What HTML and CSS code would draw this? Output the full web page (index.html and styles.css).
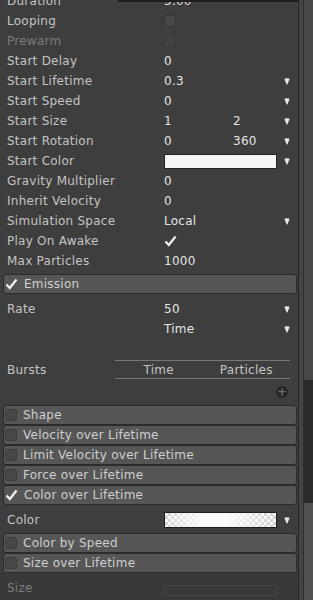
FILE: index.html
```html
<!DOCTYPE html>
<html>
<head>
    <meta charset="UTF-8">
    <title>Particle System</title>
    <link rel="stylesheet" href="styles.css">
</head>
<body>
<div class="window">
    <div class="popup-edge"></div>

    <div class="inspector">
        <div class="props">
            <div class="row"><span>Duration</span><span class="val">5.00</span></div>
            <div class="row"><span>Looping</span><span><i class="box"></i></span></div>
            <div class="row dim"><span>Prewarm</span><span><i class="box off"></i></span></div>
            <div class="row"><span>Start Delay</span><span class="val">0</span></div>
            <div class="row"><span>Start Lifetime</span><span class="val">0.3</span><span></span><span class="arrow"><svg width="6" height="7" viewBox="0 0 6 7"><path d="M0.3 0.8 Q3 -0.2 5.7 0.8 L3.4 6.4 H2.6 Z" fill="#e6e6e6"/></svg></span></div>
            <div class="row"><span>Start Speed</span><span class="val">0</span><span></span><span class="arrow"><svg width="6" height="7" viewBox="0 0 6 7"><path d="M0.3 0.8 Q3 -0.2 5.7 0.8 L3.4 6.4 H2.6 Z" fill="#e6e6e6"/></svg></span></div>
            <div class="row"><span>Start Size</span><span class="val">1</span><span class="val">2</span><span class="arrow"><svg width="6" height="7" viewBox="0 0 6 7"><path d="M0.3 0.8 Q3 -0.2 5.7 0.8 L3.4 6.4 H2.6 Z" fill="#e6e6e6"/></svg></span></div>
            <div class="row"><span>Start Rotation</span><span class="val">0</span><span class="val">360</span><span class="arrow"><svg width="6" height="7" viewBox="0 0 6 7"><path d="M0.3 0.8 Q3 -0.2 5.7 0.8 L3.4 6.4 H2.6 Z" fill="#e6e6e6"/></svg></span></div>
            <div class="row"><span>Start Color</span><span class="swatch"></span><span class="arrow"><svg width="6" height="7" viewBox="0 0 6 7"><path d="M0.3 0.8 Q3 -0.2 5.7 0.8 L3.4 6.4 H2.6 Z" fill="#e6e6e6"/></svg></span></div>
            <div class="row"><span>Gravity Multiplier</span><span class="val">0</span></div>
            <div class="row"><span>Inherit Velocity</span><span class="val">0</span></div>
            <div class="row"><span>Simulation Space</span><span class="val">Local</span><span></span><span class="arrow"><svg width="6" height="7" viewBox="0 0 6 7"><path d="M0.3 0.8 Q3 -0.2 5.7 0.8 L3.4 6.4 H2.6 Z" fill="#e6e6e6"/></svg></span></div>
            <div class="row"><span>Play On Awake</span><span class="tick"><svg width="13" height="12" viewBox="0 0 13 12"><polyline points="1.5,6.5 4.8,10 11.5,1.5" fill="none" stroke="#f2f2f2" stroke-width="2.2"/></svg></span></div>
            <div class="row"><span>Max Particles</span><span class="val">1000</span></div>
        </div>

        <!-- Emission -->
        <div class="module first">
            <div class="module-head">
                <span class="tick"><svg width="13" height="12" viewBox="0 0 13 12"><polyline points="1.5,6.5 4.8,10 11.5,1.5" fill="none" stroke="#f2f2f2" stroke-width="2.2"/></svg></span>
                <span>Emission</span>
            </div>
            <div class="module-body">
                <div class="row"><span>Rate</span><span class="val">50</span><span></span><span class="arrow"><svg width="6" height="7" viewBox="0 0 6 7"><path d="M0.3 0.8 Q3 -0.2 5.7 0.8 L3.4 6.4 H2.6 Z" fill="#e6e6e6"/></svg></span></div>
                <div class="row"><span></span><span class="val">Time</span><span></span><span class="arrow"><svg width="6" height="7" viewBox="0 0 6 7"><path d="M0.3 0.8 Q3 -0.2 5.7 0.8 L3.4 6.4 H2.6 Z" fill="#e6e6e6"/></svg></span></div>
                <div class="bursts">
                    <span>Bursts</span>
                    <div class="burst-table">
                        <span>Time</span>
                        <span>Particles</span>
                    </div>
                </div>
                <div class="add-row"><span class="plus">+</span></div>
            </div>
        </div>

        <div class="module"><div class="module-head"><i class="box"></i><span>Shape</span></div></div>
        <div class="module"><div class="module-head"><i class="box"></i><span>Velocity over Lifetime</span></div></div>
        <div class="module"><div class="module-head"><i class="box"></i><span>Limit Velocity over Lifetime</span></div></div>
        <div class="module"><div class="module-head"><i class="box"></i><span>Force over Lifetime</span></div></div>

        <div class="module">
            <div class="module-head">
                <span class="tick"><svg width="13" height="12" viewBox="0 0 13 12"><polyline points="1.5,6.5 4.8,10 11.5,1.5" fill="none" stroke="#f2f2f2" stroke-width="2.2"/></svg></span>
                <span>Color over Lifetime</span>
            </div>
            <div class="module-body short">
                <div class="row"><span>Color</span><span class="gradient"></span><span class="arrow"><svg width="6" height="7" viewBox="0 0 6 7"><path d="M0.3 0.8 Q3 -0.2 5.7 0.8 L3.4 6.4 H2.6 Z" fill="#e6e6e6"/></svg></span></div>
            </div>
        </div>

        <div class="module"><div class="module-head"><i class="box"></i><span>Color by Speed</span></div></div>
        <div class="module">
            <div class="module-head"><i class="box"></i><span>Size over Lifetime</span></div>
            <div class="module-body disabled">
                <div class="row dim"><span>Size</span><span class="curve"></span></div>
            </div>
        </div>
    </div>

    <div class="scroll">
        <div class="gutter"></div>
        <div class="track">
            <div class="track-top"></div>
            <div class="track-thumb"></div>
            <div class="track-end"></div>
        </div>
    </div>
</div>
</body>
</html>
```

FILE: styles.css
```css
body {
    margin: 0;
    background: #3e3e3e;
    font-family: "DejaVu Sans", sans-serif;
    font-size: 12px;
    letter-spacing: 0.25px;
    color: #c4c4c4;
    overflow: hidden;
}

.window {
    position: relative;
    display: flex;
    height: 600px;
    overflow: hidden;
}

/* bottom edge of the popup above the panel */
.popup-edge {
    position: absolute;
    top: 0;
    left: 118px;
    width: 181px;
    height: 2px;
    background: #1f1f1f;
}

.inspector {
    width: 298px;
    flex: none;
    overflow: hidden;
}

.props {
    margin-top: -9px;
}

.row {
    display: grid;
    grid-template-columns: 157px 69px 48px 12px;
    align-items: center;
    height: 20px;
    padding: 0 5px 0 7px;
    white-space: nowrap;
}

.val {
    color: #e4e4e4;
}

.dim {
    color: #7c7c7c;
}

.arrow {
    grid-column: 4;
    display: flex;
    justify-content: center;
}

.tick {
    display: flex;
    align-items: center;
}

.box {
    display: block;
    width: 10px;
    height: 10px;
    background: #474747;
    border: 1px solid #363636;
    border-radius: 2px;
}

.box.off {
    background: #424242;
    border-color: #3a3a3a;
}

.swatch {
    grid-column: 2 / 4;
    height: 13px;
    margin-right: 4px;
    background: #f4f4f4;
    border: 1px solid #222;
}

.gradient {
    grid-column: 2 / 4;
    height: 14px;
    margin-right: 4px;
    border: 1px solid #1e1e1e;
    background:
        linear-gradient(to right, rgba(255,255,255,0.35), #fafafa 35%, #fafafa 55%, rgba(255,255,255,0.3)),
        repeating-conic-gradient(#b9b9b9 0 25%, #f2f2f2 0 50%) 0 0 / 6px 6px;
}

.curve {
    grid-column: 2 / 4;
    height: 9px;
    margin: 4px 4px 0 0;
    border: 1px solid #474747;
}

/* modules */
.module.first {
    margin-top: 3px;
}

.module-head {
    box-sizing: border-box;
    display: flex;
    align-items: center;
    gap: 6px;
    height: 20px;
    margin: 0 1px 0 3px;
    padding-left: 1px;
    background: #565656;
    border: 1px solid #2b2b2b;
    border-radius: 3px;
    color: #cfcfcf;
    white-space: nowrap;
}

.module-head .box {
    background: #474747;
    border-color: #3c3c3c;
}

.module-body {
    padding-top: 5px;
}

.module-body.short {
    padding-bottom: 3px;
}

.module-body.disabled {
    background: linear-gradient(#3a3a3a, #363636);
    height: 40px;
}

.bursts {
    display: flex;
    align-items: center;
    margin-top: 21px;
    padding-left: 7px;
}

.bursts > span {
    width: 108px;
}

.burst-table {
    display: grid;
    grid-template-columns: 1fr 1fr;
    width: 175px;
    height: 17px;
    align-items: center;
    text-align: center;
    border-top: 1px solid #777;
    border-bottom: 1px solid #777;
}

.add-row {
    display: flex;
    justify-content: flex-end;
    padding: 7px 10px 7px 0;
}

.plus {
    width: 12px;
    height: 12px;
    border-radius: 50%;
    background: #262626;
    color: #6a6a6a;
    font-size: 12px;
    font-weight: bold;
    line-height: 12px;
    letter-spacing: 0;
    text-align: center;
}

/* scrollbar */
.scroll {
    display: flex;
    flex: 1;
    border-left: 1px solid #262626;
}

.gutter {
    width: 4px;
    background: #444;
    border-right: 1px solid #2e2e2e;
}

.track {
    flex: 1;
    display: flex;
    flex-direction: column;
}

.track-top {
    height: 380px;
    background: #474747;
}

.track-thumb {
    height: 123px;
    background: #2a2a2a;
}

.track-end {
    flex: 1;
    background: #515151;
}
```
